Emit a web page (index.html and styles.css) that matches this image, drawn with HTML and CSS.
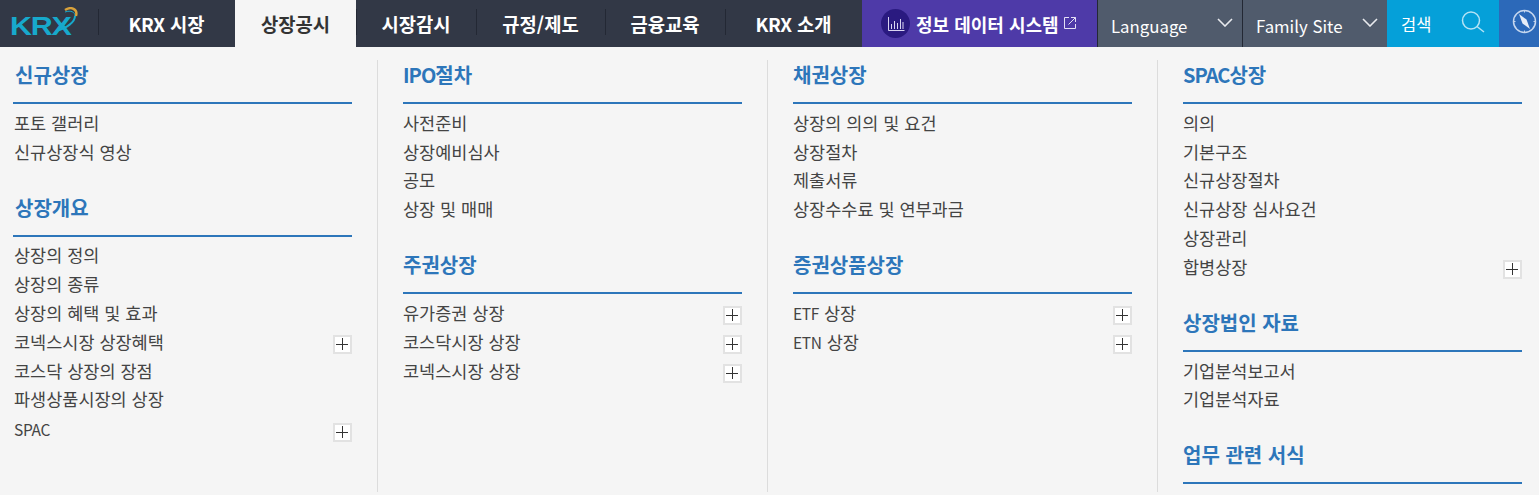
FILE: index.html
```html
<!DOCTYPE html>
<html lang="ko">
<head>
    <meta charset="UTF-8">
    <title>KRX 상장공시</title>
    <link rel="stylesheet" href="styles.css">
</head>
<body>
    <header class="topbar">
        <a class="logo" href="#">
            <span class="logo-text">KRX</span>
            <svg class="logo-swoosh" width="30" height="26" viewBox="0 0 30 26" fill="none">
                <path d="M6 24 C17 21 25 15 25 9" stroke="#17a9cc" stroke-width="2"/>
                <path d="M25 9 C25 5 21 3 15 5" stroke="#17a9cc" stroke-width="1"/>
                <path d="M15 3 C21 -1 28 2 26 9" stroke="#d9a23b" stroke-width="2.4"/>
            </svg>
        </a>
        <nav class="gnb">
            <a class="gnb-item w1" href="#"><span class="latin">KRX</span>&nbsp;시장</a>
            <a class="gnb-item w2 active" href="#">상장공시</a>
            <a class="gnb-item w3" href="#">시장감시</a>
            <a class="gnb-item w4" href="#">규정/제도</a>
            <a class="gnb-item w5" href="#">금융교육</a>
            <a class="gnb-item w6" href="#"><span class="latin">KRX</span>&nbsp;소개</a>
        </nav>
        <a class="data-system" href="#">
            <span class="data-icon">
                <svg width="18" height="16" viewBox="0 0 18 16" fill="none" stroke="#d8d4f0" stroke-width="1">
                    <path d="M1.5 1V14.5H17.5"/>
                    <path d="M4.5 13V8M7.5 13V5M10.5 13V7M13.5 13V3M16 13V6"/>
                </svg>
            </span>
            <span class="data-label">정보 데이터 시스템</span>
            <svg class="ext-icon" width="14" height="14" viewBox="0 0 14 14" fill="none" stroke="#e4e0f5" stroke-width="1">
                <path d="M6 1.5H1.5V12.5H12.5V8"/>
                <path d="M5.5 8.5L12.5 1.5M8 1.5H12.5V6"/>
            </svg>
        </a>
        <a class="select-box" href="#">
            <span>Language</span>
            <svg width="16" height="9" viewBox="0 0 16 9" fill="none" stroke="#e8eaee" stroke-width="1.6"><path d="M1 1L8 8L15 1"/></svg>
        </a>
        <a class="select-box" href="#">
            <span>Family Site</span>
            <svg width="16" height="9" viewBox="0 0 16 9" fill="none" stroke="#e8eaee" stroke-width="1.6"><path d="M1 1L8 8L15 1"/></svg>
        </a>
        <a class="search" href="#">
            <span>검색</span>
            <svg class="top-icon search-icon" width="24" height="22" viewBox="0 0 24 22" fill="none" stroke="#b4e3f5" stroke-width="1.5">
                <circle cx="10" cy="9.5" r="8.5"/>
                <path d="M16 15.5L23 21"/>
            </svg>
        </a>
        <a class="compass" href="#">
            <svg class="top-icon" width="25" height="25" viewBox="0 0 25 25" fill="none" stroke="#c5d6ee" stroke-width="1.5">
                <circle cx="12.5" cy="12.5" r="11"/>
                <path d="M12.5 1V3.5M12.5 21.5V24M1 12.5H3.5M21.5 12.5H24" stroke-width="1"/>
                <path d="M7 5L14.5 10.5L18 20L10.5 14.5Z" fill="#e6edf7" stroke="none"/>
            </svg>
        </a>
    </header>

    <main class="menu">
        <div class="col first">
            <h3>신규상장</h3>
            <ul>
                <li>포토 갤러리</li>
                <li>신규상장식 영상</li>
            </ul>
            <h3>상장개요</h3>
            <ul>
                <li>상장의 정의</li>
                <li>상장의 종류</li>
                <li>상장의 혜택 및 효과</li>
                <li>코넥스시장 상장혜택<i class="plus"></i></li>
                <li>코스닥 상장의 장점</li>
                <li>파생상품시장의 상장</li>
                <li class="spac-row"><span class="latin">SPAC</span><i class="plus"></i></li>
            </ul>
        </div>
        <div class="col">
            <h3><span class="latin">IPO</span>절차</h3>
            <ul>
                <li>사전준비</li>
                <li>상장예비심사</li>
                <li>공모</li>
                <li>상장 및 매매</li>
            </ul>
            <h3>주권상장</h3>
            <ul>
                <li>유가증권 상장<i class="plus"></i></li>
                <li>코스닥시장 상장<i class="plus"></i></li>
                <li>코넥스시장 상장<i class="plus"></i></li>
            </ul>
        </div>
        <div class="col">
            <h3>채권상장</h3>
            <ul>
                <li>상장의 의의 및 요건</li>
                <li>상장절차</li>
                <li>제출서류</li>
                <li>상장수수료 및 연부과금</li>
            </ul>
            <h3>증권상품상장</h3>
            <ul>
                <li><span><span class="latin">ETF</span> 상장</span><i class="plus"></i></li>
                <li><span><span class="latin">ETN</span> 상장</span><i class="plus"></i></li>
            </ul>
        </div>
        <div class="col">
            <h3><span class="latin">SPAC</span>상장</h3>
            <ul>
                <li>의의</li>
                <li>기본구조</li>
                <li>신규상장절차</li>
                <li>신규상장 심사요건</li>
                <li>상장관리</li>
                <li>합병상장<i class="plus"></i></li>
            </ul>
            <h3>상장법인 자료</h3>
            <ul>
                <li>기업분석보고서</li>
                <li>기업분석자료</li>
            </ul>
            <h3>업무 관련 서식</h3>
        </div>
    </main>
</body>
</html>
```

FILE: styles.css
```css
* {
    box-sizing: border-box;
}
html, body {
    height: 495px;
    overflow: hidden;
}
body {
    margin: 0;
    background-color: #f5f5f5;
    color: #444;
    font-family: "Noto Sans CJK KR", "Noto Sans", sans-serif;
}
a {
    color: inherit;
    text-decoration: none;
}
ul {
    list-style: none;
    margin: 0;
    padding: 0;
}

/* top bar */
.topbar {
    display: flex;
    height: 47px;
    background: #323846;
}
.logo {
    position: relative;
    width: 98px;
    padding: 15px 0 0 10px;
    flex: none;
}
.logo-text {
    display: block;
    font-family: "Liberation Sans", sans-serif;
    font-weight: bold;
    font-size: 25px;
    line-height: 22px;
    letter-spacing: -1px;
    color: #17a9cc;
    transform: scaleX(1.22);
    transform-origin: left center;
}
.logo-swoosh {
    position: absolute;
    left: 50px;
    top: 7px;
}
.gnb {
    display: flex;
    flex: none;
}
.gnb-item {
    display: flex;
    align-items: center;
    justify-content: center;
    height: 47px;
    color: #fff;
    font-size: 18.8px;
    font-weight: 700;
    position: relative;
}
.gnb-item .latin {
    letter-spacing: -0.4px;
}
.gnb-item::before {
    content: "";
    position: absolute;
    left: 0;
    top: 9px;
    height: 26px;
    width: 1px;
    background: #232834;
}
.w1 { width: 137px; }
.w2 { width: 121px; }
.w3 { width: 120px; }
.w4 { width: 129px; }
.w5 { width: 120px; }
.w6 { width: 137px; }
.gnb-item.active {
    background: #f5f5f5;
    color: #333;
}
.gnb-item.active::before {
    display: none;
}
.data-system {
    display: flex;
    align-items: center;
    width: 235px;
    flex: none;
    padding-left: 19px;
    background: #4e3aa8;
    color: #fff;
    font-size: 18px;
    font-weight: 700;
}
.data-icon {
    display: flex;
    align-items: center;
    justify-content: center;
    width: 29px;
    height: 29px;
    margin-right: 6px;
    border-radius: 50%;
    background: #2a1a80;
}
.ext-icon {
    margin-left: 4px;
    margin-top: -1px;
}
.select-box {
    display: flex;
    align-items: center;
    justify-content: space-between;
    width: 145px;
    flex: none;
    padding: 4px 9px 0 13px;
    background: #505b6c;
    border-left: 1px solid #232834;
    color: #fff;
    font-size: 16.8px;
}
.select-box svg {
    margin-top: -6px;
}
.search {
    display: flex;
    align-items: center;
    justify-content: space-between;
    width: 112px;
    flex: none;
    padding: 0 14px;
    background: #05a0d9;
    color: #fff;
    font-size: 16.5px;
}
.compass {
    display: flex;
    align-items: center;
    flex: none;
    width: 40px;
    padding-left: 13px;
    background: #2c69b9;
}
.top-icon {
    margin-top: -5px;
}
.search-icon {
    margin-top: -3px;
}

/* sitemap columns */
.menu {
    display: flex;
    height: 432px;
    margin-top: 13px;
}
.col {
    width: 390px;
    flex: none;
    padding: 0 25px;
    border-left: 1px solid #dcdcdc;
}
.col.first {
    width: 377px;
    padding-left: 13px;
    border-left: none;
}
.col h3 {
    margin: 0;
    height: 44px;
    border-bottom: 2px solid #2d76ba;
    color: #2d76ba;
    font-size: 20px;
    font-weight: 700;
    line-height: 29px;
}
.col h3 .latin {
    letter-spacing: -1px;
}
.col ul {
    padding: 3.9px 0 27.1px;
}
.col li {
    display: flex;
    align-items: center;
    justify-content: space-between;
    height: 28.8px;
    font-size: 17.5px;
    color: #444;
}
.col.first h3, .col.first li {
    padding-left: 1px;
}
.col.first h3 {
    padding-left: 2px;
}
.col li .latin {
    font-size: 15.5px;
    letter-spacing: -0.3px;
}
.spac-row {
    padding-top: 3px;
}
.plus {
    position: relative;
    display: block;
    flex: none;
    width: 19px;
    height: 19px;
    margin-top: 7px;
    background: #fff;
    border: 2px solid #e2e2e2;
}
.plus::before, .plus::after {
    content: "";
    position: absolute;
    background: #333;
}
.plus::before {
    left: 1px;
    right: 2px;
    top: 7px;
    height: 1px;
}
.plus::after {
    top: 1px;
    bottom: 2px;
    left: 7px;
    width: 1px;
}
```
